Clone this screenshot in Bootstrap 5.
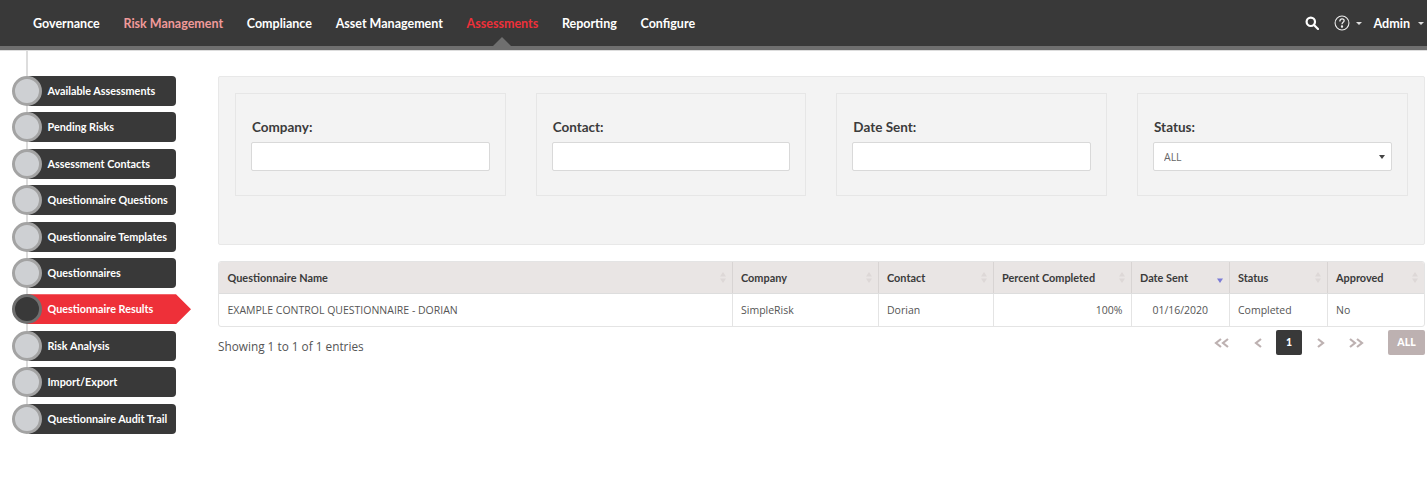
<!DOCTYPE html>
<html lang="en"><head><meta charset="utf-8"><title>Assessments</title>
<link href="https://cdn.jsdelivr.net/npm/bootstrap@5.3.0/dist/css/bootstrap.min.css" rel="stylesheet">
<style>
html,body{height:494px;overflow:hidden;background:#fff}
body{font-family:"Open Sans","Liberation Sans",sans-serif;font-size:12px;color:#555}
.topbar{height:50px;background:#393939;border-bottom:4px solid #6f6f6f;box-shadow:0 1px 0 #ddd;padding:0 0 0 33px;flex-wrap:nowrap}
.topbar .nav-link{font-family:Lato,sans-serif;font-weight:700;font-size:12.5px;color:#fff;padding:0;line-height:47px;height:46px;position:relative}
.menu-list{gap:23.7px}
.topbar .nav-link.soft{color:#f09a9a}
.topbar .nav-link.now{color:#ee3039}
.topbar .nav-link.now::after{content:"";position:absolute;left:50%;margin-left:-9px;bottom:0;border:solid transparent;border-width:0 9px 9px;border-bottom-color:#6f6f6f}
.tools{height:46px;color:#fff;font-family:Lato,sans-serif;font-weight:700;font-size:12.6px;padding-right:3px}
.tool-help{margin-left:15px}
.caret-mini{display:inline-block;border:solid transparent;border-width:3px 3px 0;border-top-color:#ddd}
.caret-a{margin-left:6px}
.tool-name{margin-left:11px;line-height:47px}
.caret-b{margin-left:8px}
.side{width:218px;flex:none;padding:26px 0 0 12px;position:relative}
.side::before{content:"";position:absolute;left:26px;top:0;height:380px;width:2px;background:#ddd}
.stepper{display:flex;flex-direction:column;gap:6.4px;position:relative}
.step{height:30px;width:164px;display:flex;align-items:center;position:relative;color:#fff;font-family:Lato,sans-serif;font-weight:700;font-size:10.8px}
.step-label{flex:1;height:30px;background:#393939;border-radius:4px;line-height:30px;padding-left:20.500px;margin-left:15px;white-space:nowrap;position:relative}
.step-dot{position:absolute;left:0;top:0;width:30px;height:30px;border-radius:50%;background:#ced0d3;border:3px solid #a3a3a3;z-index:1}
.step.on .step-dot{background:#393939;border-color:#6f6f6f}
.step.on{width:179px}
.step.on .step-label{background:#ee3039;border-radius:0;clip-path:polygon(0 0,calc(100% - 15px) 0,100% 50%,calc(100% - 15px) 100%,0 100%)}
.work{flex:1;padding:26px 2px 0 0;min-width:0}
.filter-box{height:169px;background:#f3f3f3;border:1px solid #e8e8e8;border-radius:2px;padding:16px 16.330px 16px 16px;display:grid;grid-template-columns:repeat(4,1fr);column-gap:30px;align-items:start}
.filter-cell{height:103px;background:#f3f3f3;border:1px solid #e6e6e6;padding:24px 15px 0 15px}
.filter-cell label{display:block;font-family:Lato,sans-serif;font-weight:700;font-size:13.5px;color:#3b3b3b;line-height:18px;margin-bottom:6px;padding-left:1px}
.filter-cell .form-control,.filter-cell .form-select{height:29px;border-radius:2px;border:1px solid #d9d9d9;padding:2px 10px 0;font-size:10.5px;color:#666;min-height:0}
.filter-cell .form-select{background-size:6px 4px;background-position:right 6px center;background-image:url("data:image/svg+xml,%3Csvg xmlns='http://www.w3.org/2000/svg' viewBox='0 0 6 4'%3E%3Cpath fill='%23444' d='M0 0h6L3 4z'/%3E%3C/svg%3E")}
.data-wrap{margin-top:16px;border:1px solid #e4e4e4;border-radius:3px;overflow:hidden}
.data-grid{margin:0;table-layout:fixed;width:100%;--bs-table-bg:transparent}
.data-grid th{background:#e9e5e4;font-family:Lato,sans-serif;font-weight:700;font-size:10.900px;color:#3b3b3b;height:31px;padding:2px 8px 0 8.500px;border-bottom:1px solid #ddd;border-right:1px solid #d8d4d3;vertical-align:middle;position:relative}
.data-grid td{font-size:10.5px;color:#555;height:33px;padding:3px 8px 0 8.500px;border-bottom:0;border-right:1px solid #e4e4e4;vertical-align:middle}
.data-grid th:last-child,.data-grid td:last-child{border-right:0}
.col-a{width:513px}.col-b{width:146px}.col-c{width:115px}.col-d{width:138px}.col-e{width:98px}.col-f{width:98px}.col-g{width:97px}
.sort-mark{position:absolute;right:6px;top:10px;width:6px;height:11px}
.foot-row{margin-top:3px}
.foot-info{font-size:11.800px;color:#555;line-height:33px}
.pager{align-items:flex-start}
.pg-link{width:36px;height:25px;display:flex;align-items:center;justify-content:center}
.pg-link.first{width:37px}
.pg-link.last{width:35px}
.pg-cur{width:26px;height:25px;background:#393939;color:#fff;border-radius:2px;display:flex;align-items:center;justify-content:center;font-family:Lato,sans-serif;font-weight:900;font-size:10.5px}
.pg-all{margin-left:15px;width:37px;height:25px;background:#bdb1b1;color:#fff;border-radius:2px;display:flex;align-items:center;justify-content:center;font-family:Lato,sans-serif;font-weight:900;font-size:10.5px}
.pg-link svg{fill:none;stroke:#bdb1b1;stroke-width:2.200}
</style></head>
<body>
<nav class="navbar topbar d-flex justify-content-between align-items-start">
  <ul class="nav menu-list">
    <li class="nav-item"><a class="nav-link" href="#">Governance</a></li>
    <li class="nav-item"><a class="nav-link soft" href="#">Risk Management</a></li>
    <li class="nav-item"><a class="nav-link" href="#">Compliance</a></li>
    <li class="nav-item"><a class="nav-link" href="#">Asset Management</a></li>
    <li class="nav-item"><a class="nav-link now" href="#">Assessments</a></li>
    <li class="nav-item"><a class="nav-link" href="#">Reporting</a></li>
    <li class="nav-item"><a class="nav-link" href="#">Configure</a></li>
  </ul>
  <div class="d-flex align-items-center tools">
    <svg width="14" height="14" viewBox="0 0 14 14" fill="none" stroke="#fff" stroke-width="2.2"><circle cx="5.8" cy="5.8" r="4.2"/><path d="M9 9l4 4" stroke-linecap="round"/></svg>
    <svg class="tool-help" width="16" height="16" viewBox="0 0 15 15" fill="none" stroke="#eee" stroke-width="1"><circle cx="7.5" cy="7.5" r="6.5"/><path d="M5.5 6c0-3 4-3 4-.6 0 1.5-2 1.500-2 3.200" stroke-width="1.200"/><circle cx="7.5" cy="10.800" r=".6" fill="#eee"/></svg>
    <span class="caret-mini caret-a"></span>
    <span class="tool-name">Admin</span>
    <span class="caret-mini caret-b"></span>
  </div>
</nav>
<div class="d-flex">
  <aside class="side">
    <div class="stepper">
      <div class="step"><span class="step-dot"></span><span class="step-label">Available Assessments</span></div>
      <div class="step"><span class="step-dot"></span><span class="step-label">Pending Risks</span></div>
      <div class="step"><span class="step-dot"></span><span class="step-label">Assessment Contacts</span></div>
      <div class="step"><span class="step-dot"></span><span class="step-label">Questionnaire Questions</span></div>
      <div class="step"><span class="step-dot"></span><span class="step-label">Questionnaire Templates</span></div>
      <div class="step"><span class="step-dot"></span><span class="step-label">Questionnaires</span></div>
      <div class="step on"><span class="step-dot"></span><span class="step-label">Questionnaire Results</span></div>
      <div class="step"><span class="step-dot"></span><span class="step-label">Risk Analysis</span></div>
      <div class="step"><span class="step-dot"></span><span class="step-label">Import/Export</span></div>
      <div class="step"><span class="step-dot"></span><span class="step-label">Questionnaire Audit Trail</span></div>
    </div>
  </aside>
  <main class="work">
    <div class="filter-box">
      <div class="filter-cell"><label>Company:</label><input class="form-control" type="text"></div>
      <div class="filter-cell"><label>Contact:</label><input class="form-control" type="text"></div>
      <div class="filter-cell"><label>Date Sent:</label><input class="form-control" type="text"></div>
      <div class="filter-cell"><label>Status:</label><select class="form-select"><option>ALL</option></select></div>
    </div>
    <div class="data-wrap">
      <table class="table data-grid">
        <colgroup><col class="col-a"><col class="col-b"><col class="col-c"><col class="col-d"><col class="col-e"><col class="col-f"><col class="col-g"></colgroup>
        <thead><tr>
          <th>Questionnaire Name<svg class="sort-mark" viewBox="0 0 6 11" fill="#ddd8d7"><path d="M3 0l3 4.500H0zM3 11L0 6.500h6z"/></svg></th>
          <th>Company<svg class="sort-mark" viewBox="0 0 6 11" fill="#ddd8d7"><path d="M3 0l3 4.500H0zM3 11L0 6.500h6z"/></svg></th>
          <th>Contact<svg class="sort-mark" viewBox="0 0 6 11" fill="#ddd8d7"><path d="M3 0l3 4.500H0zM3 11L0 6.500h6z"/></svg></th>
          <th>Percent Completed<svg class="sort-mark" viewBox="0 0 6 11" fill="#ddd8d7"><path d="M3 0l3 4.500H0zM3 11L0 6.500h6z"/></svg></th>
          <th>Date Sent<svg class="sort-mark" viewBox="0 0 6 11" fill="#7b7bd6"><path d="M3 11L0 6.500h6z"/></svg></th>
          <th>Status<svg class="sort-mark" viewBox="0 0 6 11" fill="#ddd8d7"><path d="M3 0l3 4.500H0zM3 11L0 6.500h6z"/></svg></th>
          <th>Approved<svg class="sort-mark" viewBox="0 0 6 11" fill="#ddd8d7"><path d="M3 0l3 4.500H0zM3 11L0 6.500h6z"/></svg></th>
        </tr></thead>
        <tbody><tr>
          <td>EXAMPLE CONTROL QUESTIONNAIRE - DORIAN</td><td>SimpleRisk</td><td>Dorian</td><td class="text-end">100%</td><td class="text-center">01/16/2020</td><td>Completed</td><td>No</td>
        </tr></tbody>
      </table>
    </div>
    <div class="d-flex justify-content-between foot-row">
      <div class="foot-info">Showing 1 to 1 of 1 entries</div>
      <div class="d-flex pager">
        <span class="pg-link first"><svg width="16" height="10" viewBox="0 0 16 10"><path d="M7 1L2 5l5 4M14 1L9 5l5 4"/></svg></span>
        <span class="pg-link"><svg width="9" height="10" viewBox="0 0 9 10"><path d="M7 1L2 5l5 4"/></svg></span>
        <span class="pg-cur">1</span>
        <span class="pg-link"><svg width="9" height="10" viewBox="0 0 9 10"><path d="M2 1l5 4-5 4"/></svg></span>
        <span class="pg-link last"><svg width="16" height="10" viewBox="0 0 16 10"><path d="M2 1l5 4-5 4M9 1l5 4-5 4"/></svg></span>
        <span class="pg-all">ALL</span>
      </div>
    </div>
  </main>
</div>
</body></html>
